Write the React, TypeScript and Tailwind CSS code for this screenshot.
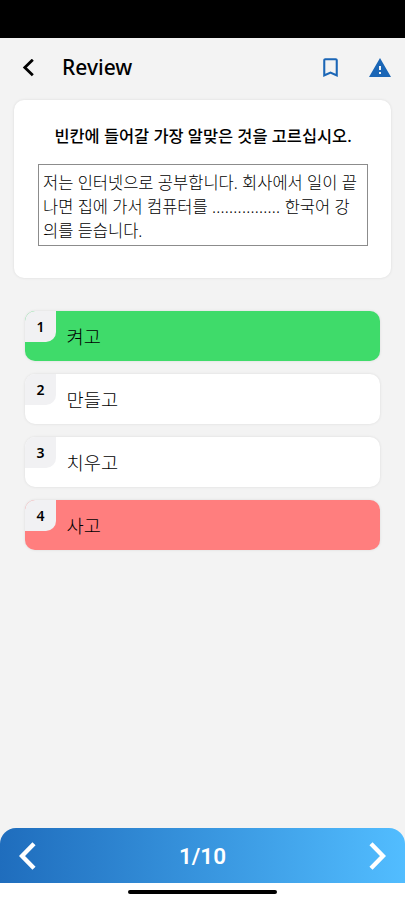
import React from 'react';
import { MdBookmarkBorder, MdWarning } from 'react-icons/md';

interface Answer {
  id: number;
  text: string;
  status: 'correct' | 'wrong' | 'idle';
}

const answers: Answer[] = [
  { id: 1, text: '켜고', status: 'correct' },
  { id: 2, text: '만들고', status: 'idle' },
  { id: 3, text: '치우고', status: 'idle' },
  { id: 4, text: '사고', status: 'wrong' },
];

const statusColors = {
  correct: 'bg-[#3fdb6a]',
  wrong: 'bg-[#ff7e7e]',
  idle: 'bg-white',
};

const AnswerRow: React.FC<{ answer: Answer }> = ({ answer }) => (
  <button
    className={`flex h-[50px] w-full items-start overflow-hidden rounded-[10px] text-left shadow-[0_0_3px_rgba(0,0,0,0.1)] ${statusColors[answer.status]}`}
  >
    <span className="flex h-[31px] w-[31px] items-center justify-center rounded-br-[10px] bg-[#f1f1f3] text-[14px] font-semibold">
      {answer.id}
    </span>
    <span className="ml-[10.5px] self-center pt-[2px] text-[18.7px] font-light leading-[26px]">{answer.text}</span>
  </button>
);

const App: React.FC = () => (
  <div className="flex h-[900px] w-full flex-col bg-[#f3f3f3] font-['Noto_Sans','Noto_Sans_CJK_KR',sans-serif] text-black">
    <div className="h-[38px] shrink-0 bg-black" />

    <header className="flex h-[59px] shrink-0 items-center pl-[22px] pr-[13px]">
      <button aria-label="Back">
        <svg className="h-[18px] w-[12px]" viewBox="0 0 12 18" fill="none" stroke="currentColor" strokeWidth="2.8">
          <path d="M10.8 .7 2.8 8.5l8 7.8" />
        </svg>
      </button>
      <h1 className="ml-[28px] text-[21px] font-medium">Review</h1>
      <div className="ml-auto flex items-center gap-[25px] text-[#1b66b6]">
        <MdBookmarkBorder className="h-[25px] w-[25px]" />
        <MdWarning className="h-6 w-6" />
      </div>
    </header>

    <main className="flex-1">
      <section className="mx-[14px] mt-[3px] h-[178px] rounded-[10px] bg-white pl-6 pr-[23px] pt-6 shadow-[0_0_3px_rgba(0,0,0,0.1)]">
        <h2 className="whitespace-nowrap text-center text-[16.4px] font-medium leading-6">
          빈칸에 들어갈 가장 알맞은 것을 고르십시오.
        </h2>
        <div className="mt-4 h-[82px] whitespace-nowrap border border-[#8c8c8c] px-1 pt-1.5 text-[16.5px] font-light leading-6">
          <p>저는 인터넷으로 공부합니다. 회사에서 일이 끝</p>
          <p>
            나면 집에 가서 컴퓨터를 <span className="tracking-[0.25px]">................</span> 한국어 강
          </p>
          <p>의를 듣습니다.</p>
        </div>
      </section>

      <div className="mx-[25px] mt-[33px] flex flex-col gap-[13px]">
        {answers.map((answer) => (
          <AnswerRow key={answer.id} answer={answer} />
        ))}
      </div>
    </main>

    <div className="shrink-0 bg-[#f3f3f3]">
      <nav className="flex h-[55px] items-center justify-between rounded-t-[16px] bg-linear-to-r from-[#1f6dbd] to-[#52bdff] px-[19px] text-white">
        <button aria-label="Previous">
          <svg className="h-7 w-[17px]" viewBox="0 0 17 28" fill="none" stroke="currentColor" strokeWidth="4.4">
            <path d="M15 1.8 3 14 15 26.2" />
          </svg>
        </button>
        <span className="pt-[3px] font-['Roboto',sans-serif] text-[22.5px] font-semibold">1/10</span>
        <button aria-label="Next">
          <svg className="h-7 w-[17px]" viewBox="0 0 17 28" fill="none" stroke="currentColor" strokeWidth="4.4">
            <path d="M2 1.8 14 14 2 26.2" />
          </svg>
        </button>
      </nav>
    </div>
    <footer className="flex h-[17px] shrink-0 justify-center bg-white pt-[7px]">
      <div className="h-1 w-[149px] rounded-full bg-black" />
    </footer>
  </div>
);

export default App;
